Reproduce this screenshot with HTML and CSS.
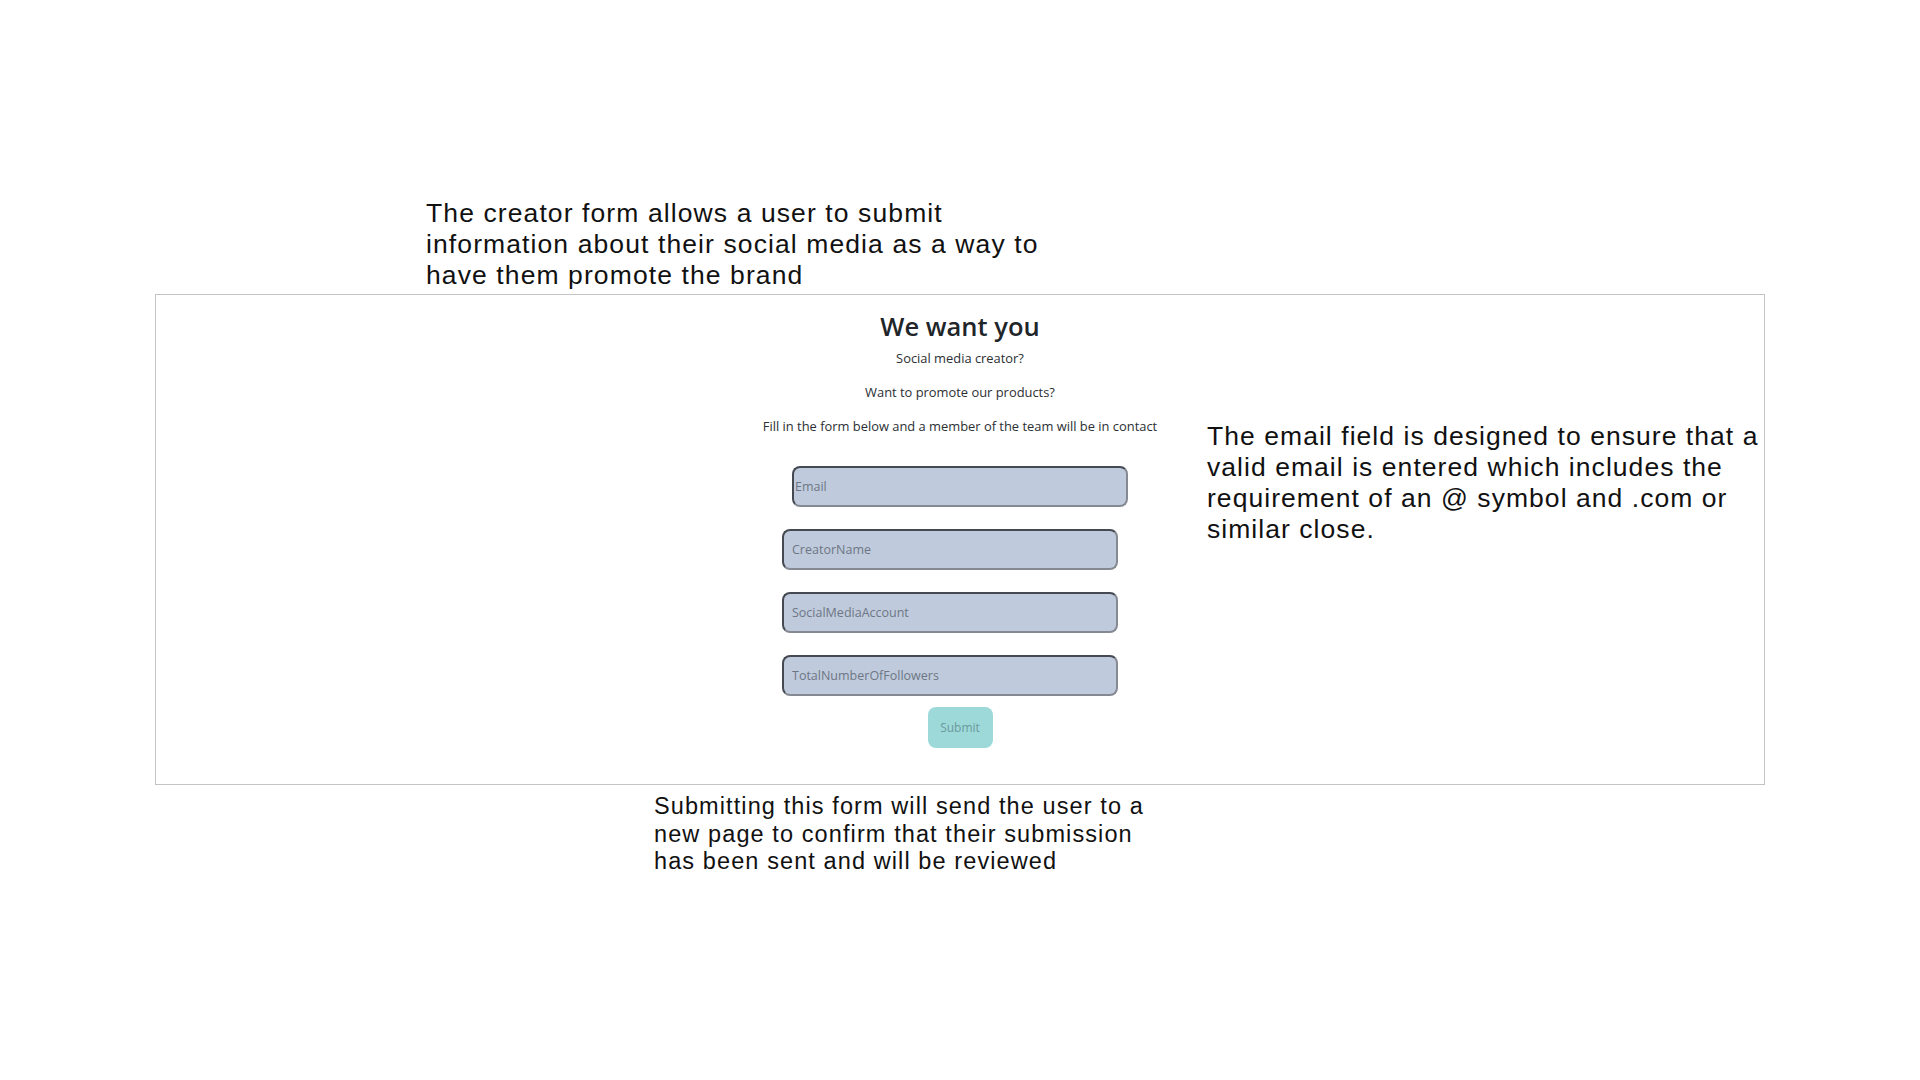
FILE: index.html
```html
<!DOCTYPE html>
<html lang="en">
<head>
<meta charset="utf-8">
<title>Creator form</title>
<link rel="stylesheet" href="styles.css">
</head>
<body>
<div class="page">
  <p class="note note-top">The creator form allows a user to submit<br>information about their social media as a way to<br>have them promote the brand</p>
  <div class="shot">
    <div class="spacer"></div>
    <form class="creator-form">
      <h1 class="title">We want you</h1>
      <p class="lead">Social media creator?</p>
      <p class="lead">Want to promote our products?</p>
      <p class="lead">Fill in the form below and a member of the team will be in contact</p>
      <input class="field field-email" type="text" placeholder="Email">
      <input class="field field-shift" type="text" placeholder="CreatorName">
      <input class="field field-shift" type="text" placeholder="SocialMediaAccount">
      <input class="field field-shift" type="text" placeholder="TotalNumberOfFollowers">
      <button class="submit" type="button">Submit</button>
    </form>
    <p class="note note-right">The email field is designed to ensure that a<br>valid email is entered which includes the<br>requirement of an @ symbol and .com or<br>similar close.</p>
  </div>
  <p class="note note-bottom">Submitting this form will send the user to a<br>new page to confirm that their submission<br>has been sent and will be reviewed</p>
</div>
</body>
</html>
```

FILE: styles.css
```css
html, body {
  margin: 0;
  padding: 0;
  background: #ffffff;
}

.page {
  width: 1920px;
  height: 1080px;
  padding-top: 198px;
  box-sizing: border-box;
}

.note {
  margin: 0;
  font-family: "Liberation Sans", Arial, sans-serif;
  color: #111111;
  white-space: nowrap;
}

.note-top {
  margin-left: 426px;
  font-size: 26.5px;
  line-height: 31px;
  letter-spacing: 1.1px;
}

.shot {
  margin: 3px 0 0 155px;
  width: 1610px;
  height: 491px;
  box-sizing: border-box;
  border: 1px solid #c4c4c4;
  display: grid;
  grid-template-columns: 1fr 400px 1fr;
  align-items: start;
}

.creator-form {
  display: flex;
  flex-direction: column;
  align-items: center;
  padding-top: 14px;
  font-family: "Open Sans", "Noto Sans", sans-serif;
}

.title {
  margin: 0;
  font-size: 25.5px;
  line-height: 34px;
  font-weight: 600;
  color: #212529;
}

.lead {
  margin: 15.8px 0 0;
  font-size: 12.9px;
  line-height: 18px;
  color: #2b2f33;
  white-space: nowrap;
}

.title + .lead {
  margin-top: 6px;
}

.field {
  width: 336px;
  height: 41px;
  box-sizing: border-box;
  margin-top: 22px;
  padding: 0 8px;
  background: #bfcbdc;
  border: 2px solid;
  border-color: #454a52 #858a92 #858a92 #454a52;
  border-radius: 8px;
  font-family: "Open Sans", "Noto Sans", sans-serif;
  font-size: 12.5px;
  color: #333;
  outline: none;
}

.field::placeholder {
  color: #6e7684;
}

.field-email {
  margin-top: 31px;
  padding-left: 1px;
}

.field-shift {
  margin-right: 20px;
}

.submit {
  margin-top: 11px;
  width: 65px;
  height: 41px;
  border: none;
  border-radius: 8px;
  background: #9dd9d9;
  color: #6b9a9d;
  font-family: "Open Sans", "Noto Sans", sans-serif;
  font-size: 12px;
  padding: 0;
}

.note-right {
  margin: 126px 0 0 47px;
  font-size: 26.5px;
  line-height: 31px;
  letter-spacing: 1.05px;
}

.note-bottom {
  margin: 8px 0 0 654px;
  font-size: 23.5px;
  line-height: 27.5px;
  letter-spacing: 1.1px;
}
```
